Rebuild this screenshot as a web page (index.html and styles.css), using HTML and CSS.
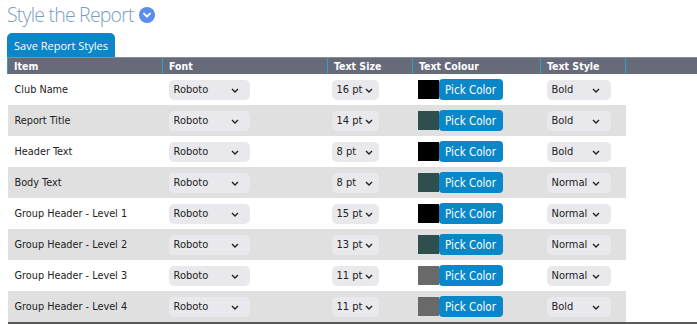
FILE: index.html
```html
<!DOCTYPE html>
<html lang="en">
<head>
    <meta charset="UTF-8">
    <meta name="viewport" content="width=device-width, initial-scale=1.0">
    <title>Style the Report</title>
    <link rel="stylesheet" href="styles.css">
</head>
<body>
    <h1 class="page-title">Style the Report
        <span class="title-toggle">
            <svg width="16" height="16" viewBox="0 0 16 16"><circle cx="8" cy="8" r="8" fill="#5b8def"/><path d="M5 6.6 L8 9.6 L11 6.6" fill="none" stroke="#fff" stroke-width="2" stroke-linecap="round" stroke-linejoin="round"/></svg>
        </span>
    </h1>

    <button class="save-btn">Save Report Styles</button>

    <table class="style-table">
        <colgroup>
            <col style="width: 155px">
            <col style="width: 165px">
            <col style="width: 85px">
            <col style="width: 128px">
            <col style="width: 85px">
            <col>
        </colgroup>
        <thead>
            <tr>
                <th>Item</th>
                <th>Font</th>
                <th>Text Size</th>
                <th>Text Colour</th>
                <th>Text Style</th>
                <th></th>
            </tr>
        </thead>
        <tbody id="rows"></tbody>
    </table>

    <script>
        // Report style settings, one row per item
        const items = [
            ['Club Name', '16', '#000000', 'Bold'],
            ['Report Title', '14', '#2f4f4f', 'Bold'],
            ['Header Text', '8', '#000000', 'Bold'],
            ['Body Text', '8', '#2f4f4f', 'Normal'],
            ['Group Header - Level 1', '15', '#000000', 'Normal'],
            ['Group Header - Level 2', '13', '#2f4f4f', 'Normal'],
            ['Group Header - Level 3', '11', '#696969', 'Normal'],
            ['Group Header - Level 4', '11', '#696969', 'Bold']
        ];

        const chevron = '<svg class="chev" width="8" height="5" viewBox="0 0 8 5"><path d="M1 1 L4 4 L7 1" fill="none" stroke="#222" stroke-width="1.4"/></svg>';

        function selectBox(cls, options, value) {
            const opts = options.map(o => `<option${o === value ? ' selected' : ''}>${o}</option>`).join('');
            return `<span class="select-wrap ${cls}"><select>${opts}</select>${chevron}</span>`;
        }

        const sizes = ['8', '9', '10', '11', '12', '13', '14', '15', '16'].map(s => s + ' pt');
        const tbody = document.getElementById('rows');

        items.forEach(function(item) {
            const tr = document.createElement('tr');
            tr.innerHTML = `
                <td>${item[0]}</td>
                <td>${selectBox('font-select', ['Roboto', 'Arial', 'Verdana'], 'Roboto')}</td>
                <td>${selectBox('size-select', sizes, item[1] + ' pt')}</td>
                <td><div class="colour-pick"><span class="swatch" style="background: ${item[2]}"></span><button class="pick-btn">Pick Color</button></div></td>
                <td>${selectBox('weight-select', ['Normal', 'Bold'], item[3])}</td>
                <td class="spacer"></td>
            `;
            tbody.appendChild(tr);
        });
    </script>
</body>
</html>
```

FILE: styles.css
```css
body {
    margin: 0;
    padding: 0 0 0 7px;
    font-family: "DejaVu Sans Condensed", "DejaVu Sans", sans-serif;
    font-size: 10.8px;
    color: #222;
}
.page-title {
    margin: 0;
    height: 33px;
    display: flex;
    align-items: center;
    gap: 5px;
    font-family: "Open Sans", sans-serif;
    font-weight: 300;
    font-size: 19.5px;
    letter-spacing: -0.8px;
    color: #7b9dbd;
    padding-bottom: 5px;
    box-sizing: border-box;
}
.title-toggle {
    display: flex;
    margin-top: 2px;
}
.save-btn {
    display: block;
    height: 24px;
    width: 108px;
    background-color: #0a87c9;
    color: white;
    border: none;
    border-radius: 5px 5px 0 0;
    font-family: "Open Sans", sans-serif;
    font-weight: 500;
    font-size: 11px;
    padding: 0;
    cursor: pointer;
}
.style-table {
    width: 690px;
    border-collapse: collapse;
    table-layout: fixed;
    border-bottom: 2px solid #5a5a5a;
}
.style-table th {
    background-color: #666a79;
    color: white;
    font-weight: bold;
    text-align: left;
    height: 16px;
    padding: 0 6px;
    border-left: 1px solid #2ea3c8;
    border-top: 1px solid #8a8d99;
    font-size: 10.5px;
}
.style-table td {
    height: 31px;
    padding: 0 6px;
    vertical-align: middle;
}
.style-table td:first-child {
    padding-left: 7px;
}
.style-table td:nth-child(3) {
    padding-left: 4px;
}
.style-table td:nth-child(4) {
    padding-left: 5px;
}
.style-table tbody tr:nth-child(even) td {
    background-color: #e0e0e0;
}
.style-table tbody tr td.spacer {
    background-color: transparent !important;
}
.select-wrap {
    position: relative;
    display: inline-block;
}
.select-wrap select {
    appearance: none;
    -webkit-appearance: none;
    background-color: #e9e9ed;
    border: none;
    border-radius: 5px;
    height: 20px;
    padding: 0 0 0 5px;
    font-family: "DejaVu Sans Condensed", "DejaVu Sans", sans-serif;
    font-size: 11px;
    color: #222;
    display: block;
}
.font-select select {
    width: 81px;
}
.size-select select {
    width: 47px;
}
.weight-select select {
    width: 64px;
}
.chev {
    position: absolute;
    top: 8px;
    right: 11px;
    pointer-events: none;
}
.size-select .chev {
    right: 6px;
}
.colour-pick {
    display: flex;
    align-items: center;
}
.swatch {
    width: 21px;
    height: 19px;
    display: block;
}
.pick-btn {
    background-color: #0a87c9;
    color: white;
    border: none;
    border-radius: 4px;
    height: 21px;
    width: 64px;
    padding: 0;
    font-family: "DejaVu Sans Condensed", "DejaVu Sans", sans-serif;
    font-size: 11.5px;
    cursor: pointer;
}
```
